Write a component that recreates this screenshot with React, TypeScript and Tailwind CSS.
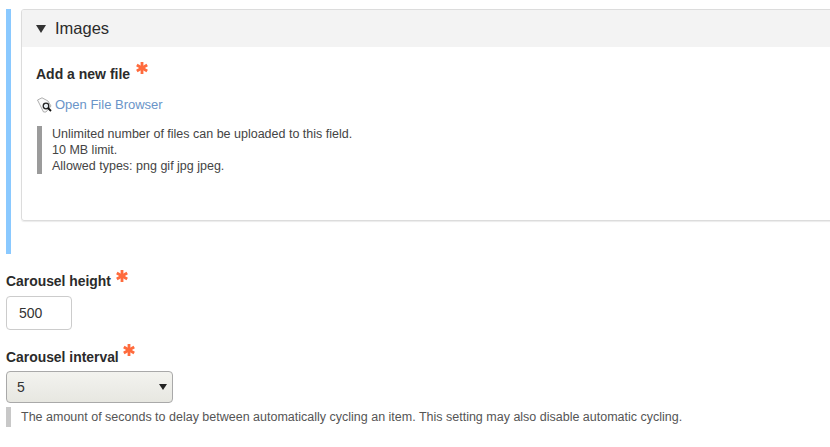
function Star() {
  return (
    <svg viewBox="0 0 12 12" className="inline-block w-[12px] h-[12px] shrink-0" aria-hidden="true">
      <g stroke="#ff6b3d" strokeWidth="2.8" strokeLinecap="butt">
        <line x1="6" y1="0" x2="6" y2="12" />
        <line x1="0.8" y1="3" x2="11.2" y2="9" />
        <line x1="0.8" y1="9" x2="11.2" y2="3" />
      </g>
    </svg>
  );
}

function FileIcon() {
  return (
    <svg viewBox="0 0 16 16" className="w-[16px] h-[16px] shrink-0" aria-hidden="true">
      <path d="M0.5 3 L5 0.8 L11 4 L14 9 L9 15 L6.5 15 Z" fill="#fbfbfb" stroke="#9a9a9a" strokeWidth="0.8" />
      <circle cx="9" cy="9" r="2.8" fill="#e8eef2" stroke="#222" strokeWidth="1.3" />
      <line x1="11" y1="11" x2="14" y2="14" stroke="#111" strokeWidth="1.8" />
    </svg>
  );
}

export default function App() {
  return (
    <div className="w-[830px] h-[447px] overflow-hidden bg-white text-[#333] font-['Liberation_Sans',Arial,sans-serif]">
      <div className="ml-[6px] mt-[9px] h-[245px] border-l-[5px] border-[#8ac9ff] pl-[10px] inline-block w-[824px] align-top">
        <div className="w-[900px] h-[212px] border border-[#dcdcdc] rounded-[3px] shadow-[0_1px_1px_rgba(0,0,0,0.08)] overflow-hidden">
          <div className="h-[37px] bg-[#f3f3f3] flex items-center pl-[14px]">
            <span className="w-0 h-0 border-x-[5px] border-x-transparent border-t-[8px] border-t-[#333]" />
            <span className="ml-[9px] text-[16.5px] leading-[37px] text-[#2b2b2b]">Images</span>
          </div>
          <div className="pl-[15px] pt-[13px]">
            <div className="flex items-start h-[26px]">
              <span className="text-[14px] font-bold leading-[20px] text-[#2b2b2b] mt-[4px] -ml-[1px]">Add a new file</span>
              <span className="ml-[6px] mt-[2px] flex"><Star /></span>
            </div>
            <div className="flex items-center mt-[9px] h-[20px]">
              <FileIcon />
              <a className="text-[13px] text-[#6a94c8] ml-[2px] leading-[20px]">Open File Browser</a>
            </div>
            <div className="mt-[11px] border-l-[5px] border-[#9b9b9b] pl-[10px] text-[12.5px] leading-[16px] text-[#444] h-[48px]">
              <div>Unlimited number of files can be uploaded to this field.</div>
              <div>10 MB limit.</div>
              <div>Allowed types: png gif jpg jpeg.</div>
            </div>
          </div>
        </div>
      </div>
      <div className="pl-[6px] mt-[10px]">
        <div className="flex items-start h-[24px]">
          <span className="text-[13.9px] font-bold leading-[20px] text-[#2b2b2b] mt-[7px]">Carousel height</span>
          <span className="ml-[5px] mt-[6px] flex"><Star /></span>
        </div>
        <div className="mt-[8px] w-[66px] h-[34px] border border-[#ccc] rounded-[4px] flex items-center pl-[12px] text-[14px] text-[#333]">500</div>
        <div className="flex items-start h-[24px] mt-[13px]">
          <span className="text-[13.9px] font-bold leading-[20px] text-[#2b2b2b] mt-[4px]">Carousel interval</span>
          <span className="ml-[4px] mt-[1px] flex"><Star /></span>
        </div>
        <div className="mt-[4px] w-[167px] h-[32px] border border-[#a9a9a9] rounded-[4px] bg-gradient-to-b from-[#f3f3ef] to-[#e7e7e1] flex items-center justify-between pl-[10px] pr-[5px] text-[14px] text-[#333]">
          <span>5</span>
          <span className="w-0 h-0 border-x-[4px] border-x-transparent border-t-[6px] border-t-[#222]" />
        </div>
        <div className="mt-[4px] border-l-[5px] border-[#c8c8c8] pl-[10px] text-[12.5px] leading-[20px] text-[#555] h-[20px] whitespace-nowrap">
          The amount of seconds to delay between automatically cycling an item. This setting may also disable automatic cycling.
        </div>
      </div>
    </div>
  );
}
